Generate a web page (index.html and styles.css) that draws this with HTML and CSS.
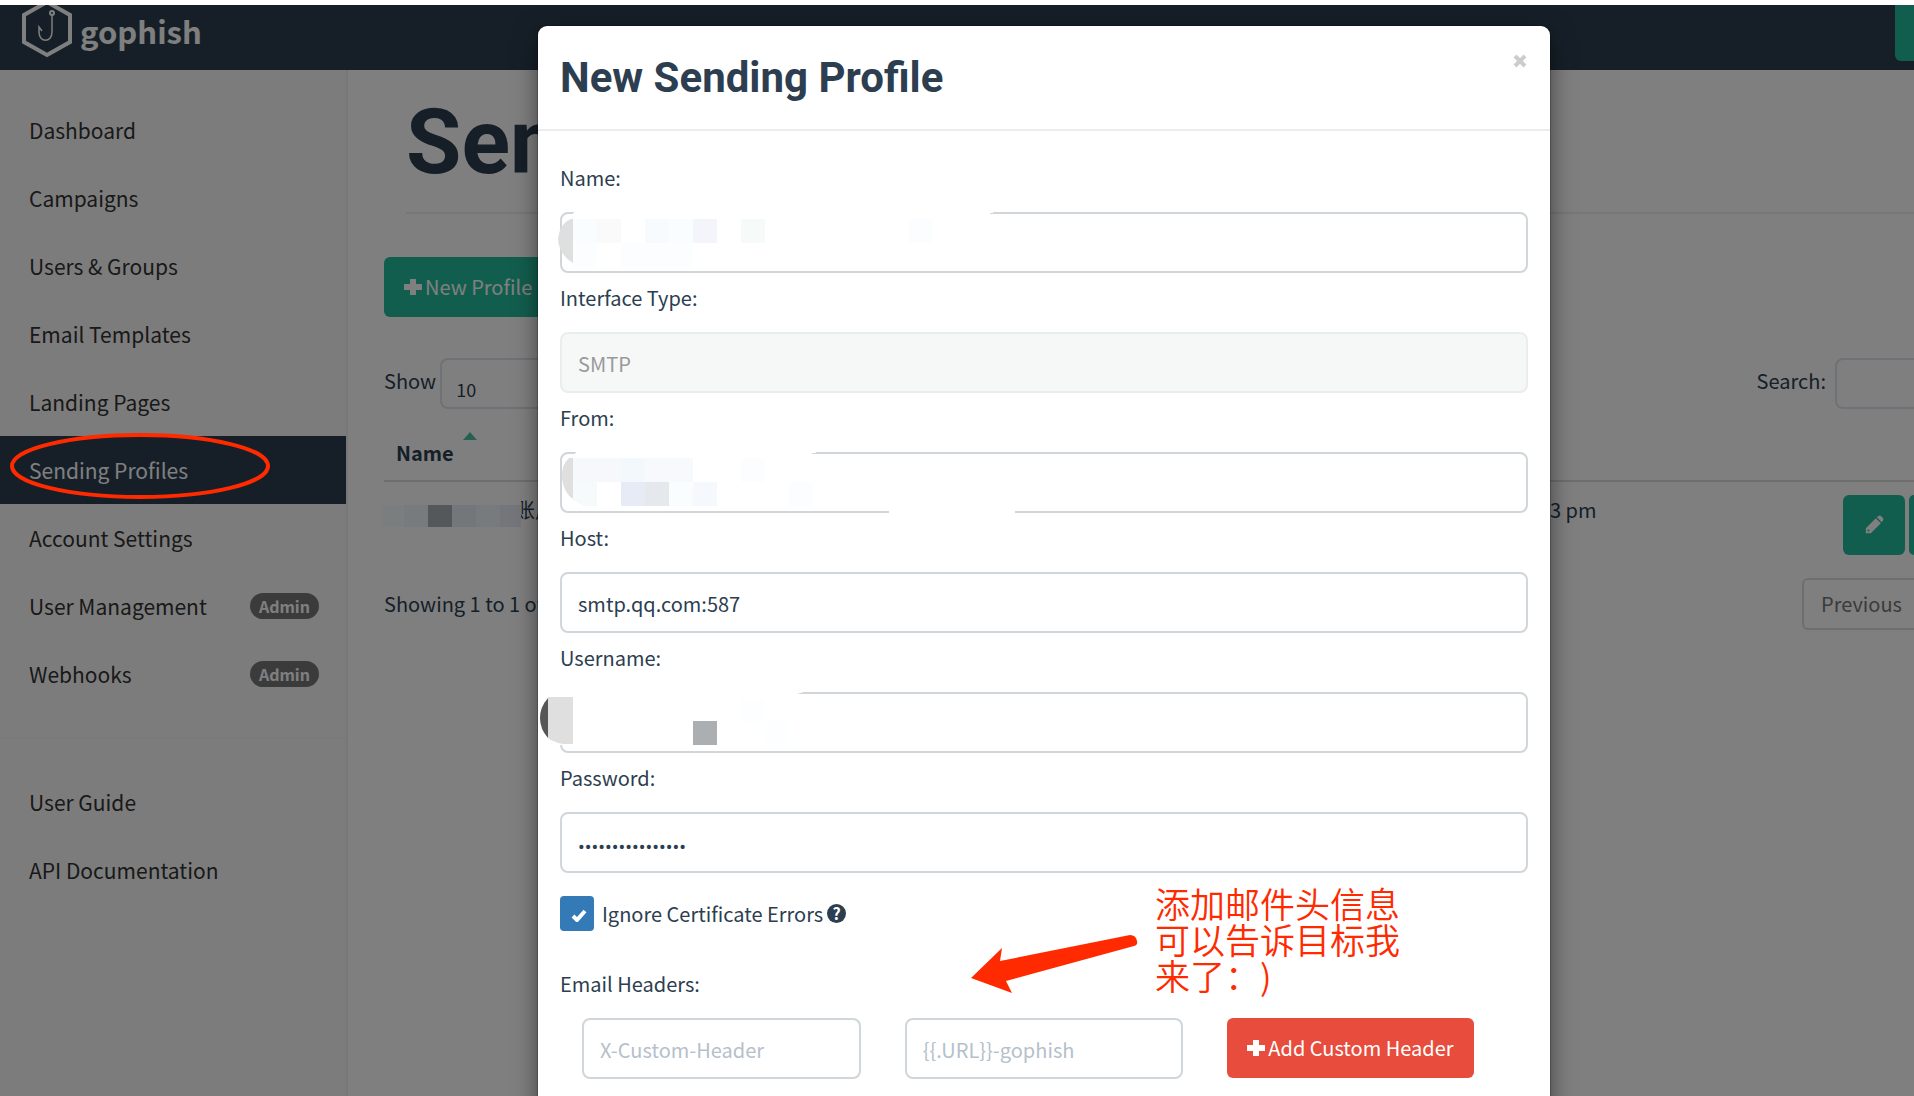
FILE: index.html
```
<!DOCTYPE html>
<html lang="en">

<head>
    <meta charset="UTF-8">
    <meta name="viewport" content="width=device-width, initial-scale=1.0">
    <title>Gophish - Sending Profiles</title>
    <link rel="stylesheet" href="styles.css">
</head>

<body>
    <div class="app">
        <header class="navbar">
            <a class="brand" href="#">
                <svg class="brand-logo" width="52" height="58" viewBox="0 0 52 58" fill="none" stroke="#fff">
                    <path d="M26 0L49 13V40L26 53L3 40V13Z" stroke-width="4" />
                    <circle cx="31" cy="11" r="2" stroke-width="2" />
                    <path d="M31 13V30C31 41 18 41 18 30V25L21 29" stroke-width="1.500" />
                </svg>
                gophish
            </a>
            <button class="nav-btn" type="button" aria-label="Account"></button>
        </header>

        <div class="layout">
            <nav class="sidebar">
                <ul class="menu">
                    <li><a href="#">Dashboard</a></li>
                    <li><a href="#">Campaigns</a></li>
                    <li><a href="#">Users &amp; Groups</a></li>
                    <li><a href="#">Email Templates</a></li>
                    <li><a href="#">Landing Pages</a></li>
                    <li><a class="active" href="#">Sending Profiles</a></li>
                    <li><a href="#">Account Settings</a></li>
                    <li><a href="#">User Management <span class="badge">Admin</span></a></li>
                    <li><a href="#">Webhooks <span class="badge">Admin</span></a></li>
                </ul>
                <hr>
                <ul class="menu">
                    <li><a href="#">User Guide</a></li>
                    <li><a href="#">API Documentation</a></li>
                </ul>
            </nav>

            <main class="main">
                <h1 class="page-header">Sending Profiles</h1>
                <button class="btn btn-primary" type="button">
                    <svg class="plus" width="18" height="18" viewBox="0 0 18 18"><path d="M6 1h6v5h6v6h-6v5h-6v-5h-6v-6h6z" fill="currentColor" /></svg>
                    New Profile
                </button>
                <div class="toolbar">
                    <label for="length">Show</label>
                    <select id="length" class="length">
                        <option>10</option>
                        <option>25</option>
                    </select>
                    <label class="search-label" for="search">Search:</label>
                    <input id="search" class="search" type="search">
                </div>
                <table class="profiles">
                    <thead>
                        <tr>
                            <th class="col-name">Name <span class="sort"></span></th>
                            <th></th>
                            <th class="col-actions"></th>
                        </tr>
                    </thead>
                    <tbody>
                        <tr>
                            <td class="col-name">
                                <span class="profile-name">账户</span>
                                <svg class="mask mask-row" width="138" height="38" viewBox="0 0 138 38" shape-rendering="crispEdges">
                                    <path d="M0 0h138v38h-138z" fill="#fff" />
                                    <path d="M0 10h21v22h-21z" fill="#f7fcff" />
                                    <path d="M21 10h24v22h-24z" fill="#eff6fa" />
                                    <path d="M45 10h24v22h-24z" fill="#a8b0b4" />
                                    <path d="M69 10h24v22h-24z" fill="#e6eff6" />
                                    <path d="M93 10h24v22h-24z" fill="#eff6fb" />
                                    <path d="M117 10h21v22h-21z" fill="#e9ecf6" />
                                </svg>
                            </td>
                            <td>3 pm</td>
                            <td class="col-actions">
                                <div class="actions">
                                    <button class="btn btn-primary btn-icon" type="button" aria-label="Edit">
                                        <svg width="20" height="20" viewBox="0 0 22 22"><path d="M14 2.500L16 1Q17.500 0 19 1.500L20.500 3Q22 4.500 21 6L19.500 8ZM13 3.500L18.500 9L7.500 20H2V14.500ZM4 15.500V18H6.500L5.500 16.500Z" fill="currentColor" fill-rule="evenodd" /></svg>
                                    </button>
                                    <button class="btn btn-primary btn-copy" type="button" aria-label="Copy"></button>
                                </div>
                            </td>
                        </tr>
                    </tbody>
                </table>
                <div class="table-footer">
                    <span>Showing 1 to 1 of 1 entries</span>
                    <button class="page-btn" type="button" disabled>Previous</button>
                </div>
            </main>
        </div>

        <div class="backdrop">
            <div class="modal" role="dialog" aria-labelledby="modal-title">
                <div class="modal-header">
                    <h2 id="modal-title">New Sending Profile</h2>
                    <button class="close" type="button" aria-label="Close">
                        <svg width="14" height="14" viewBox="0 0 14 14"><path d="M2 2L12 12M12 2L2 12" stroke="currentColor" stroke-width="4" /></svg>
                    </button>
                </div>
                <form class="modal-body">
                    <div class="field">
                        <label for="name">Name:</label>
                        <input id="name" type="text">
                        <svg class="mask" width="460" height="64" viewBox="0 0 460 64" shape-rendering="crispEdges">
                            <path d="M40 0H460Q450 4 440 6H30Z" fill="#fff" />
                            <path d="M34 8Q23 12 21 28Q22 44 36 52V8Z" fill="#dfdfdf" shape-rendering="auto" />
                            <path d="M36 8h24v24h-24z" fill="#f9fdff" />
                            <path d="M60 8h24v24h-24z" fill="#fafafa" />
                            <path d="M108 8h24v24h-24z" fill="#f7fbfd" />
                            <path d="M132 8h24v24h-24z" fill="#f9fdff" />
                            <path d="M156 8h24v24h-24z" fill="#f4f5fa" />
                            <path d="M204 8h24v24h-24z" fill="#f6faf9" />
                            <path d="M372 8h24v24h-24zM36 32h24v24h-24zM84 32h72v24h-72z" fill="#fcfdfe" />
                        </svg>
                    </div>
                    <div class="field">
                        <label for="type">Interface Type:</label>
                        <input id="type" type="text" value="SMTP" disabled>
                    </div>
                    <div class="field">
                        <label for="from">From:</label>
                        <input id="from" type="text">
                        <svg class="mask" width="500" height="64" viewBox="0 0 500 64" shape-rendering="crispEdges">
                            <path d="M40 0H285L260 6H36ZM352 56H478V64H352Z" fill="#fff" />
                            <path d="M32 7Q24 14 25 28Q27 42 36 48V7Z" fill="#dfdfdf" shape-rendering="auto" />
                            <path d="M36 7h48v24h-48z" fill="#f7f8fb" />
                            <path d="M84 7h24v24h-24z" fill="#f3f8fc" />
                            <path d="M108 7h48v24h-48z" fill="#f7f9fc" />
                            <path d="M36 31h24v24h-12q-8 -2 -12 -7z" fill="#f6fafb" />
                            <path d="M84 31h24v24h-24z" fill="#e7ebf6" />
                            <path d="M108 31h24v24h-24z" fill="#e5e9ed" />
                            <path d="M132 31h24v24h-24z" fill="#fafdfe" />
                            <path d="M156 31h24v24h-24z" fill="#f5f9fe" />
                            <path d="M204 7h24v24h-24zM252 31h24v24h-24z" fill="#fcfdfe" />
                        </svg>
                    </div>
                    <div class="field">
                        <label for="host">Host:</label>
                        <input id="host" type="text" value="smtp.qq.com:587">
                    </div>
                    <div class="field">
                        <label for="username">Username:</label>
                        <input id="username" type="text">
                        <svg class="mask" width="280" height="64" viewBox="0 0 280 64">
                            <path d="M20 0H270L250 6H36V54H20Z" fill="#fff" />
                            <path d="M11 7Q3 16 3 27Q3 38 11 47Z" fill="#565656" />
                            <path d="M11 6H36V53H26Q16 51 11 47Z" fill="#dfdfdf" />
                            <path d="M156 30h24v24h-24z" fill="#abafb2" />
                            <path d="M228 30h24v24h-24zM204 8h24v24h-24z" fill="#fcfeff" />
                        </svg>
                    </div>
                    <div class="field">
                        <label for="password">Password:</label>
                        <input id="password" type="password" value="1234567890123456">
                    </div>
                    <div class="check">
                        <input id="ignore" type="checkbox" checked>
                        <label for="ignore">Ignore Certificate Errors</label>
                        <span class="help">?</span>
                    </div>
                    <label class="headers-label" for="header-key">Email Headers:</label>
                    <div class="headers-row">
                        <input id="header-key" type="text" placeholder="X-Custom-Header">
                        <input id="header-value" type="text" placeholder="{{.URL}}-gophish" aria-label="Header value">
                        <button class="btn btn-danger" type="button">
                            <svg class="plus" width="18" height="18" viewBox="0 0 18 18"><path d="M6 1h6v5h6v6h-6v5h-6v-5h-6v-6h6z" fill="currentColor" /></svg>
                            Add Custom Header
                        </button>
                    </div>
                </form>
                <svg class="arrow" width="170" height="50" viewBox="0 0 170 50">
                    <path d="M1 33L32 3L30 16L160 -10Q166 -10 167 -4Q168 0 164 1L36 36L42 48Z" fill="#ff2a00" />
                </svg>
                <p class="note" lang="zh-CN">添加邮件头信息<br>可以告诉目标我<br>来了：)</p>
            </div>
        </div>
        <svg class="circle" width="262" height="68" viewBox="0 0 262 68">
            <ellipse cx="131" cy="34" rx="128" ry="31" fill="none" stroke="#ff2a00" stroke-width="4" />
        </svg>
    </div>
</body>

</html>
```
FILE: styles.css
```
* {
    box-sizing: border-box;
}

body {
    margin: 0;
    padding-top: 5px;
    height: 100vh;
    overflow: hidden;
    background-color: #fff;
    font-family: "Noto Sans CJK SC", sans-serif;
    font-size: 20px;
    line-height: 30px;
    color: #2c3e50;
}

input,
select,
button {
    font: inherit;
    color: inherit;
}

.app {
    position: relative;
    display: flex;
    flex-direction: column;
    height: 100%;
    overflow: hidden;
}

.navbar {
    display: flex;
    justify-content: space-between;
    flex: none;
    height: 65px;
    padding-left: 21px;
    overflow: hidden;
    background-color: #2c3e50;
}

.brand {
    display: flex;
    align-items: center;
    gap: 7px;
    height: 52px;
    color: #fff;
    font-size: 31px;
    font-weight: bold;
    text-decoration: none;
}

.nav-btn {
    width: 19px;
    height: 56px;
    border: 0;
    border-radius: 0 0 0 6px;
    background-color: #25bc9c;
}

.layout {
    display: flex;
    flex: 1;
}

.sidebar {
    flex: none;
    width: 348px;
    padding-top: 26px;
    background-color: #f9f9f9;
    border-right: 2px solid #eee;
    font-size: 21px;
}

.sidebar hr {
    margin: 29px 0;
    border: 0;
    border-top: 2px solid #f2f2f2;
}

.menu {
    margin: 0;
    padding: 0;
    list-style: none;
}

.menu a {
    display: flex;
    align-items: center;
    justify-content: space-between;
    height: 68px;
    padding: 0 27px 0 29px;
    color: #333;
    text-decoration: none;
}

.menu .active {
    background-color: #2c3e50;
    color: #fff;
}

.badge {
    padding: 0 9px;
    border-radius: 13px;
    background-color: #777;
    color: #fff;
    font-size: 16px;
    line-height: 26px;
    font-weight: bold;
}

.main {
    flex: 1;
    padding: 24px 0 0 36px;
}

.page-header {
    margin: 0 0 43px 22px;
    padding-bottom: 20px;
    border-bottom: 2px solid #eee;
    font-family: Roboto, sans-serif;
    font-size: 90px;
    line-height: 98px;
    font-weight: bold;
}

.btn {
    display: flex;
    align-items: center;
    justify-content: center;
    gap: 3px;
    height: 60px;
    padding: 0 20px;
    border: 0;
    border-radius: 6px;
    color: #fff;
    white-space: nowrap;
}

.btn-primary {
    background-color: #25bc9c;
}

.btn-danger {
    background-color: #e74c3c;
}

.btn-icon {
    width: 62px;
}

.btn-copy {
    width: 5px;
    padding: 0;
    border-radius: 6px 0 0 6px;
}

.plus {
    flex: none;
}

.toolbar {
    display: flex;
    align-items: center;
    gap: 4px;
    margin-top: 41px;
}

.toolbar label {
    padding-bottom: 6px;
}

.length,
.search {
    height: 51px;
    border: 2px solid #dce4ec;
    border-radius: 8px;
    background-color: #fff;
}

.length {
    appearance: none;
    width: 120px;
    padding: 10px 14px 0;
    font-size: 18px;
}

.search-label {
    margin-left: auto;
}

.search {
    width: 79px;
    margin-left: 5px;
    border-right: 0;
    border-radius: 8px 0 0 8px;
}

.profiles {
    width: 100%;
    margin-top: 20px;
    border-collapse: collapse;
    table-layout: fixed;
}

.profiles th,
.profiles td {
    padding: 13px 12px 12px;
    text-align: left;
    vertical-align: top;
}

.profiles th {
    padding-top: 9px;
    border-bottom: 2px solid #ddd;
}

.profiles .col-name {
    position: relative;
    width: 1154px;
}

.profiles .col-actions {
    width: 71px;
    padding-left: 0;
    padding-right: 0;
}

.sort {
    position: absolute;
    left: 79px;
    top: 3px;
    border: 7px solid transparent;
    border-top: 0;
    border-bottom: 8px solid #4fc0a0;
}

.profile-name {
    padding-left: 119px;
}

.actions {
    display: flex;
    gap: 4px;
}

.table-footer {
    display: flex;
    align-items: center;
    justify-content: space-between;
    margin-top: 11px;
}

.page-btn {
    width: 112px;
    height: 52px;
    padding: 0 0 0 17px;
    border: 2px solid #ddd;
    border-right: 0;
    border-radius: 6px 0 0 6px;
    background-color: #fff;
    color: #777;
    text-align: left;
}

.backdrop {
    position: absolute;
    inset: 0;
    display: flex;
    justify-content: center;
    align-items: flex-start;
    padding: 21px 0 0 174px;
    background-color: rgba(0, 0, 0, 0.5);
}

.modal {
    position: relative;
    width: 1012px;
    min-height: 1200px;
    border-radius: 9px;
    background-color: #fff;
    box-shadow: 0 0 0 1px rgba(0, 0, 0, 0.2), 0 8px 24px rgba(0, 0, 0, 0.5);
}

.modal-header {
    display: flex;
    align-items: flex-start;
    justify-content: space-between;
    padding: 21px 22px;
    border-bottom: 2px solid #ececec;
}

.modal-header h2 {
    margin: 0;
    font-family: Roboto, sans-serif;
    font-size: 42px;
    line-height: 61px;
    font-weight: bold;
}

.close {
    display: flex;
    margin: 7px 1px 0;
    padding: 0;
    border: 0;
    background: none;
    color: #ccc;
}

.modal-body {
    padding: 32px 22px;
}

.field {
    position: relative;
    display: flex;
    flex-direction: column;
}

.field label {
    height: 49px;
}

.field + .field {
    margin-top: 10px;
}

.modal-body input[type="text"],
.modal-body input[type="password"] {
    width: 100%;
    height: 61px;
    padding: 2px 16px 0;
    border: 2px solid #d0d6da;
    border-radius: 8px;
    background-color: #fff;
}

.modal-body input[type="text"]:disabled {
    border-color: #e9eded;
    background-color: #f6f8f8;
    color: #999;
}

.modal-body input::placeholder {
    color: #b5c0cb;
}

.modal-body input[type="password"] {
    padding-top: 8px;
    font-family: Roboto, sans-serif;
}

/* mosaics over private values */
.mask {
    position: absolute;
    left: -23px;
    top: 48px;
}

.mask-row {
    left: -1px;
    top: 13px;
}

.check {
    display: flex;
    align-items: center;
    gap: 8px;
    margin-top: 23px;
}

.check input {
    appearance: none;
    width: 34px;
    height: 35px;
    margin: 0;
    border-radius: 4px;
    background: #337ab7 url("data:image/svg+xml,%3Csvg xmlns='http://www.w3.org/2000/svg' width='16' height='13'%3E%3Cpath d='M2 7l4 4l8-9' fill='none' stroke='white' stroke-width='4'/%3E%3C/svg%3E") no-repeat 11px 13px;
}

.help {
    width: 19px;
    height: 19px;
    margin-left: -4px;
    border-radius: 50%;
    background-color: #2c3e50;
    color: #fff;
    font-size: 16px;
    line-height: 19px;
    font-weight: bold;
    text-align: center;
}

.headers-label {
    display: block;
    margin-top: 38px;
}

.headers-row {
    display: grid;
    grid-template-columns: repeat(3, 1fr);
    gap: 44px;
    margin-top: 19px;
    padding: 0 22px;
}

.headers-row .btn {
    justify-self: start;
}

.arrow {
    position: absolute;
    left: 432px;
    top: 919px;
    overflow: visible;
}

.note {
    position: absolute;
    left: 617px;
    top: 859px;
    margin: 0;
    color: #ff2a00;
    font-size: 35px;
    line-height: 36px;
    font-weight: 350;
    text-spacing-trim: space-all;
}

.circle {
    position: absolute;
    left: 9px;
    top: 427px;
}
```
